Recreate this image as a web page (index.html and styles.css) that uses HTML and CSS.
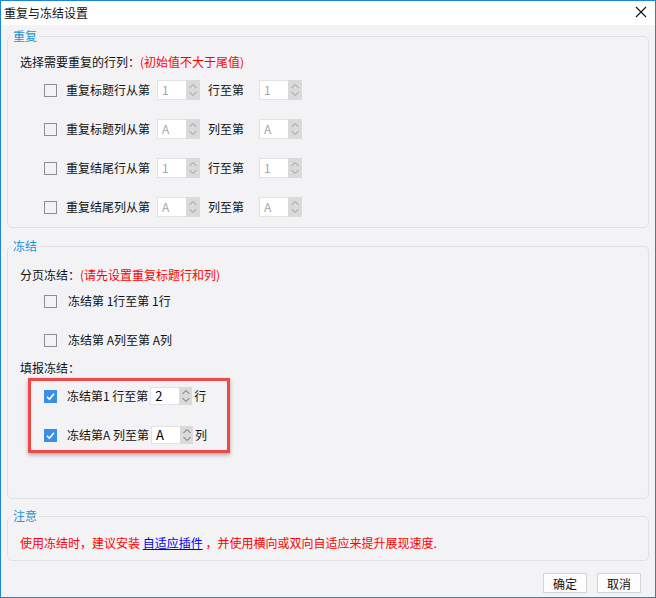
FILE: index.html
```html
<!DOCTYPE html>
<html>
<head>
<meta charset="utf-8">
<title>重复与冻结设置</title>
<link rel="stylesheet" href="styles.css">
</head>
<body>
<div class="win">
  <div class="titlebar">
    <span class="title">重复与冻结设置</span>
    <svg class="close" width="12" height="12" viewBox="0 0 12 12"><path d="M1 1L11 11M11 1L1 11" stroke="#111" stroke-width="1.1" fill="none"/></svg>
  </div>
  <div class="body">

    <fieldset class="group g-repeat">
      <legend>重复</legend>
      <div class="hint">选择需要重复的行列：<span class="warn">(初始值不大于尾值)</span></div>
      <div class="row first">
        <span class="chk"></span><span class="lbl">重复标题行从第</span>
        <span class="spin"><span class="val">1</span><span class="arr"><svg width="10" height="16" viewBox="0 0 10 16"><path d="M1.5 6L5 2.5L8.5 6M1.5 10L5 13.5L8.5 10" stroke="#9a9a9a" fill="none"/></svg></span></span>
        <span class="lbl to">行至第</span>
        <span class="spin"><span class="val">1</span><span class="arr"><svg width="10" height="16" viewBox="0 0 10 16"><path d="M1.5 6L5 2.5L8.5 6M1.5 10L5 13.5L8.5 10" stroke="#9a9a9a" fill="none"/></svg></span></span>
      </div>
      <div class="row">
        <span class="chk"></span><span class="lbl">重复标题列从第</span>
        <span class="spin"><span class="val">A</span><span class="arr"><svg width="10" height="16" viewBox="0 0 10 16"><path d="M1.5 6L5 2.5L8.5 6M1.5 10L5 13.5L8.5 10" stroke="#9a9a9a" fill="none"/></svg></span></span>
        <span class="lbl to">列至第</span>
        <span class="spin"><span class="val">A</span><span class="arr"><svg width="10" height="16" viewBox="0 0 10 16"><path d="M1.5 6L5 2.5L8.5 6M1.5 10L5 13.5L8.5 10" stroke="#9a9a9a" fill="none"/></svg></span></span>
      </div>
      <div class="row">
        <span class="chk"></span><span class="lbl">重复结尾行从第</span>
        <span class="spin"><span class="val">1</span><span class="arr"><svg width="10" height="16" viewBox="0 0 10 16"><path d="M1.5 6L5 2.5L8.5 6M1.5 10L5 13.5L8.5 10" stroke="#9a9a9a" fill="none"/></svg></span></span>
        <span class="lbl to">行至第</span>
        <span class="spin"><span class="val">1</span><span class="arr"><svg width="10" height="16" viewBox="0 0 10 16"><path d="M1.5 6L5 2.5L8.5 6M1.5 10L5 13.5L8.5 10" stroke="#9a9a9a" fill="none"/></svg></span></span>
      </div>
      <div class="row">
        <span class="chk"></span><span class="lbl">重复结尾列从第</span>
        <span class="spin"><span class="val">A</span><span class="arr"><svg width="10" height="16" viewBox="0 0 10 16"><path d="M1.5 6L5 2.5L8.5 6M1.5 10L5 13.5L8.5 10" stroke="#9a9a9a" fill="none"/></svg></span></span>
        <span class="lbl to">列至第</span>
        <span class="spin"><span class="val">A</span><span class="arr"><svg width="10" height="16" viewBox="0 0 10 16"><path d="M1.5 6L5 2.5L8.5 6M1.5 10L5 13.5L8.5 10" stroke="#9a9a9a" fill="none"/></svg></span></span>
      </div>
    </fieldset>

    <fieldset class="group g-freeze">
      <legend>冻结</legend>
      <div class="hint">分页冻结：<span class="warn">(请先设置重复标题行和列)</span></div>
      <div class="row page first">
        <span class="chk"></span><span class="lbl">冻结第 1行至第 1行</span>
      </div>
      <div class="row page">
        <span class="chk"></span><span class="lbl">冻结第 A列至第 A列</span>
      </div>
      <div class="hint fill">填报冻结：</div>
      <div class="mark">
        <div class="row fillrow">
          <span class="chk on"><svg width="13" height="13" viewBox="0 0 13 13"><path d="M3 6.8L5.4 9.2L10 3.8" stroke="#fff" stroke-width="1.6" fill="none"/></svg></span>
          <span class="lbl">冻结第1 行至第</span>
          <span class="spin dark"><span class="val">2</span><span class="arr"><svg width="10" height="16" viewBox="0 0 10 16"><path d="M1.5 6L5 2.5L8.5 6M1.5 10L5 13.5L8.5 10" stroke="#666" fill="none"/></svg></span></span>
          <span class="lbl unit">行</span>
        </div>
        <div class="row fillrow">
          <span class="chk on"><svg width="13" height="13" viewBox="0 0 13 13"><path d="M3 6.8L5.4 9.2L10 3.8" stroke="#fff" stroke-width="1.6" fill="none"/></svg></span>
          <span class="lbl">冻结第A 列至第</span>
          <span class="spin dark"><span class="val">A</span><span class="arr"><svg width="10" height="16" viewBox="0 0 10 16"><path d="M1.5 6L5 2.5L8.5 6M1.5 10L5 13.5L8.5 10" stroke="#666" fill="none"/></svg></span></span>
          <span class="lbl unit">列</span>
        </div>
      </div>
    </fieldset>

    <fieldset class="group g-note">
      <legend>注意</legend>
      <div class="note">使用冻结时，建议安装 <a href="#">自适应插件</a> ，并使用横向或双向自适应来提升展现速度.</div>
    </fieldset>

    <div class="actions">
      <button>确定</button>
      <button>取消</button>
    </div>
  </div>
</div>
</body>
</html>
```

FILE: styles.css
```css
body {
	margin: 0;
	font-family: "Noto Sans CJK SC", "Liberation Sans", sans-serif;
	font-size: 12px;
	color: #111;
}
.win {
	width: 656px;
	height: 598px;
	box-sizing: border-box;
	border: 1px solid #1c86d8;
	display: flex;
	flex-direction: column;
	background: #f3f3f6;
}
.titlebar {
	height: 24px;
	flex: none;
	background: #fff;
	display: flex;
	align-items: center;
	justify-content: space-between;
	padding: 0 8px 0 3px;
}
.title {
	line-height: 24px;
	margin-top: -1px;
}
.close {
	margin-top: -2px;
}
.body {
	flex: 1;
	display: flex;
	flex-direction: column;
	padding: 3px 6px 0 6px;
}
.group {
	margin: 0;
	padding: 0 0 0 12px;
	border: 1px solid #e1e1e5;
	border-radius: 5px;
	min-width: 0;
}
.group legend {
	margin-left: -9px;
	padding: 0 2px;
	line-height: 16px;
	color: #1795d6;
	font-size: 12px;
}
.g-repeat {
	padding-top: 8px;
	padding-bottom: 10px;
}
.g-freeze {
	margin-top: 10px;
	padding-top: 11px;
	padding-bottom: 45px;
}
.g-note {
	margin-top: 9px;
	padding-top: 9px;
	padding-bottom: 7px;
}
.hint {
	height: 20px;
	line-height: 20px;
}
.warn {
	color: #ff0000;
}
.row {
	display: flex;
	align-items: center;
	height: 20px;
	padding-left: 24px;
	margin-top: 19px;
}
.row.first {
	margin-top: 8px;
}
.row.page.first {
	margin-top: 6px;
}
.hint.fill {
	margin-top: 8px;
}
.chk {
	width: 13px;
	height: 13px;
	box-sizing: border-box;
	border: 1px solid #8f8f8f;
	flex: none;
	display: flex;
}
.chk.on {
	border: none;
	background: #3a8ee6;
}
.lbl {
	margin-left: 9px;
	line-height: 20px;
	white-space: pre;
}
.lbl.to {
	margin-left: 8px;
	margin-right: 8px;
}
.page .lbl {
	margin-left: 11px;
}
.spin {
	display: flex;
	width: 43px;
	height: 20px;
	margin-left: 7px;
	flex: none;
}
.spin .val {
	flex: 1;
	box-sizing: border-box;
	background: #fff;
	border: 1px solid #e2e2e2;
	border-right: none;
	color: #a6a6a6;
	padding-left: 4px;
	line-height: 18px;
}
.spin .arr {
	width: 14px;
	background: #dadada;
	display: flex;
	align-items: center;
	justify-content: center;
}
.mark {
	margin: 0 0 0 8px;
	width: 202px;
	box-sizing: border-box;
	border: 3px solid #f14747;
	padding: 5px 0 5px 0;
	box-shadow: 0 2px 4px rgba(0, 0, 0, 0.3);
}
.mark .row {
	padding-left: 13px;
}
.mark .row.fillrow + .row.fillrow {
	margin-top: 19px;
}
.mark .row:first-child {
	margin-top: 0;
}
.fillrow .lbl {
	margin-left: 10px;
}
.spin.dark {
	width: 42px;
	height: 18px;
	margin-left: 2px;
}
.spin.dark .val {
	color: #000;
	font-size: 13px;
	line-height: 16px;
}
.spin.dark .arr {
	width: 13px;
}
.lbl.unit {
	margin-left: 2px;
}
.note {
	height: 20px;
	line-height: 20px;
	color: #ff0000;
}
.note a {
	color: #0000ee;
}
.actions {
	margin-top: 12px;
	display: flex;
	justify-content: flex-end;
	gap: 10px;
	padding-right: 8px;
}
.actions button {
	width: 44px;
	height: 20px;
	padding: 0;
	border: 1px solid #d4d4d4;
	background: #fdfdfd;
	font-family: "Noto Sans CJK SC", sans-serif;
	font-size: 12px;
	color: #111;
}
```
